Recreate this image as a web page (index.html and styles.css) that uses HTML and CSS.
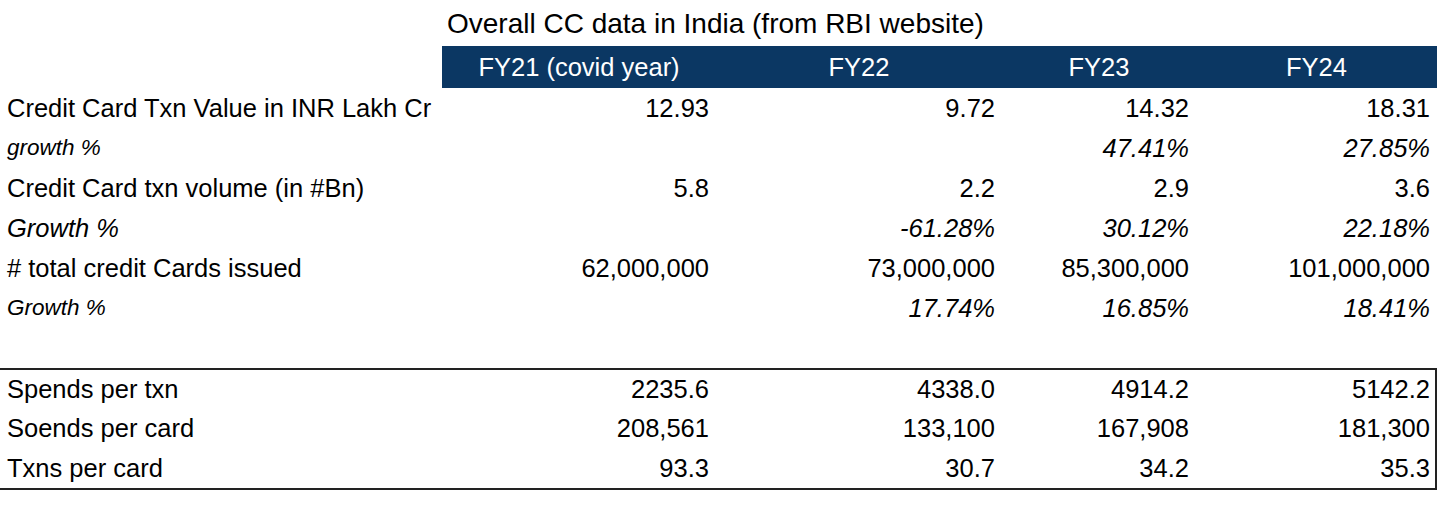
FILE: index.html
```html
<!DOCTYPE html>
<html>
<head>
<meta charset="utf-8">
<link rel="stylesheet" href="styles.css">
</head>
<body>
<div class="sheet">
  <div class="title">Overall CC data in India (from RBI website)</div>
  <div class="grid head">
    <div class="cell blank"></div>
    <div class="cell hd">FY21 (covid year)</div>
    <div class="cell hd">FY22</div>
    <div class="cell hd">FY23</div>
    <div class="cell hd">FY24</div>
  </div>
  <div class="grid row">
    <div class="cell label">Credit Card Txn Value in INR Lakh Cr</div>
    <div class="cell num">12.93</div>
    <div class="cell num">9.72</div>
    <div class="cell num">14.32</div>
    <div class="cell num">18.31</div>
  </div>
  <div class="grid row it">
    <div class="cell label small">growth %</div>
    <div class="cell num"></div>
    <div class="cell num"></div>
    <div class="cell num">47.41%</div>
    <div class="cell num">27.85%</div>
  </div>
  <div class="grid row">
    <div class="cell label">Credit Card txn volume (in #Bn)</div>
    <div class="cell num">5.8</div>
    <div class="cell num">2.2</div>
    <div class="cell num">2.9</div>
    <div class="cell num">3.6</div>
  </div>
  <div class="grid row it">
    <div class="cell label">Growth %</div>
    <div class="cell num"></div>
    <div class="cell num">-61.28%</div>
    <div class="cell num">30.12%</div>
    <div class="cell num">22.18%</div>
  </div>
  <div class="grid row">
    <div class="cell label"># total credit Cards issued</div>
    <div class="cell num">62,000,000</div>
    <div class="cell num">73,000,000</div>
    <div class="cell num">85,300,000</div>
    <div class="cell num">101,000,000</div>
  </div>
  <div class="grid row it">
    <div class="cell label small">Growth %</div>
    <div class="cell num">
    </div>
    <div class="cell num">17.74%</div>
    <div class="cell num">16.85%</div>
    <div class="cell num">18.41%</div>
  </div>
  <div class="grid row"></div>
  <div class="box">
    <div class="grid row">
      <div class="cell label">Spends per txn</div>
      <div class="cell num">2235.6</div>
      <div class="cell num">4338.0</div>
      <div class="cell num">4914.2</div>
      <div class="cell num">5142.2</div>
    </div>
    <div class="grid row">
      <div class="cell label">Soends per card</div>
      <div class="cell num">208,561</div>
      <div class="cell num">133,100</div>
      <div class="cell num">167,908</div>
      <div class="cell num">181,300</div>
    </div>
    <div class="grid row">
      <div class="cell label">Txns per card</div>
      <div class="cell num">93.3</div>
      <div class="cell num">30.7</div>
      <div class="cell num">34.2</div>
      <div class="cell num">35.3</div>
    </div>
  </div>
</div>
</body>
</html>
```
FILE: styles.css
```css
html, body {
  margin: 0;
  padding: 0;
  background: #fff;
}
body {
  font-family: "Liberation Sans", Arial, sans-serif;
  font-size: 25.5px;
  color: #000;
}
.sheet {
  width: 1437px;
}
.title {
  height: 46px;
  line-height: 48px;
  padding-left: 447px;
  box-sizing: border-box;
  font-size: 28px;
}
.grid {
  display: grid;
  grid-template-columns: 442px 274px 286px 194px 241px;
}
.head {
  height: 42px;
}
.row {
  height: 40px;
}
.cell {
  display: flex;
  align-items: center;
  white-space: nowrap;
}
.hd {
  background: #0b3763;
  color: #fff;
  justify-content: center;
}
.label {
  padding-left: 7px;
}
.num {
  justify-content: flex-end;
  padding-right: 7px;
}
.it .cell {
  font-style: italic;
}
.it .small {
  font-size: 22.5px;
}
.box {
  border-top: 2px solid #222;
  border-right: 2px solid #222;
  border-bottom: 2px solid #222;
  width: 1437px;
  box-sizing: border-box;
}
.box .row {
  height: 39.3px;
}
```
